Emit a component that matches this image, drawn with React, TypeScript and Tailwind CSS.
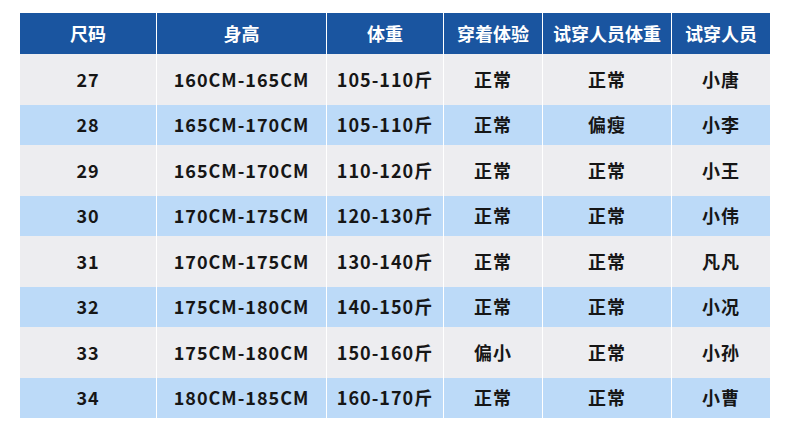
const headers = ['尺码', '身高', '体重', '穿着体验', '试穿人员体重', '试穿人员']

const rows = [
  ['27', '160CM-165CM', '105-110斤', '正常', '正常', '小唐'],
  ['28', '165CM-170CM', '105-110斤', '正常', '偏瘦', '小李'],
  ['29', '165CM-170CM', '110-120斤', '正常', '正常', '小王'],
  ['30', '170CM-175CM', '120-130斤', '正常', '正常', '小伟'],
  ['31', '170CM-175CM', '130-140斤', '正常', '正常', '凡凡'],
  ['32', '175CM-180CM', '140-150斤', '正常', '正常', '小况'],
  ['33', '175CM-180CM', '150-160斤', '偏小', '正常', '小孙'],
  ['34', '180CM-185CM', '160-170斤', '正常', '正常', '小曹'],
]

const cols = 'grid grid-cols-[136px_170px_117px_99px_129px_99px]'

export default function App() {
  return (
    <div
      className="w-[790px] h-[434px] bg-white pt-[13px] px-5"
      style={{ fontFamily: '"Noto Sans CJK SC", "Noto Sans", sans-serif' }}
    >
      <div className={`${cols} h-[41px] bg-[#1a55a0] text-white text-[18px] font-bold`}>
        {headers.map((h, i) => (
          <div
            key={h}
            className={`flex items-center justify-center ${i > 0 ? 'border-l border-white' : ''}`}
          >
            {h}
          </div>
        ))}
      </div>
      {rows.map((r, ri) => (
        <div
          key={r[0]}
          className={`${cols} text-[18px] font-bold text-[#161616] tracking-[1px] ${
            ri % 2 === 0 ? 'h-[50.5px] bg-[#ededf0]' : 'h-[40.5px] bg-[#bcdaf8]'
          }`}
        >
          {r.map((c, i) => (
            <div
              key={i}
              className={`flex items-center justify-center ${i > 0 ? 'border-l border-white' : ''}`}
            >
              {c}
            </div>
          ))}
        </div>
      ))}
    </div>
  )
}
